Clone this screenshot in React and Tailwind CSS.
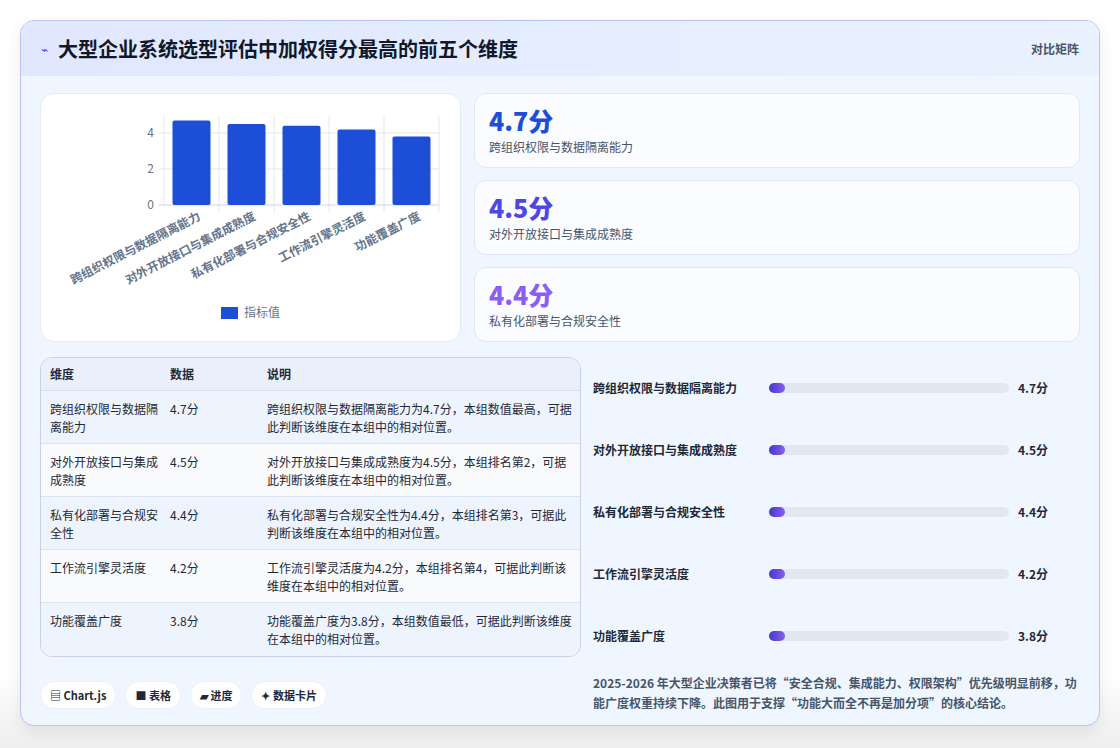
const data = [
  { n: "跨组织权限与数据隔离能力", v: 4.7, d: "跨组织权限与数据隔离能力为4.7分，本组数值最高，可据此判断该维度在本组中的相对位置。", t: "跨组织权限与数据隔离能力", tn: "跨组织权限与数据隔\n离能力" },
  { n: "对外开放接口与集成成熟度", v: 4.5, d: "对外开放接口与集成成熟度为4.5分，本组排名第2，可据此判断该维度在本组中的相对位置。", tn: "对外开放接口与集成\n成熟度" },
  { n: "私有化部署与合规安全性", v: 4.4, d: "私有化部署与合规安全性为4.4分，本组排名第3，可据此判断该维度在本组中的相对位置。", tn: "私有化部署与合规安\n全性" },
  { n: "工作流引擎灵活度", v: 4.2, d: "工作流引擎灵活度为4.2分，本组排名第4，可据此判断该维度在本组中的相对位置。", tn: "工作流引擎灵活度" },
  { n: "功能覆盖广度", v: 3.8, d: "功能覆盖广度为3.8分，本组数值最低，可据此判断该维度在本组中的相对位置。", tn: "功能覆盖广度" },
];
const F = { fontFamily: '"Noto Sans CJK SC","Noto Sans",sans-serif' };

function Chart() {
  const base = 111, unit = 18, x0 = 123, step = 55;
  return (
    <svg width="420" height="248" viewBox="0 0 420 248" style={F}>
      {[0, 1, 2, 3, 4, 5].map(i => (
        <line key={i} x1={x0 + i * step} x2={x0 + i * step} y1={22} y2={i===0?111:118} stroke="#e5e7eb" />
      ))}
      {[0, 2, 4].map(t => (
        <g key={t}>
          <line x1={x0 - 5} x2={x0 + 5 * step} y1={base - t * unit} y2={base - t * unit} stroke={t === 0 ? "#cbd5e1" : "#e5e7eb"} />
          <text x={x0 - 10} y={base - t * unit + 4} fontSize="12" fill="#6b7280" textAnchor="end">{t}</text>
        </g>
      ))}
      {data.map((d, i) => {
        const cx = x0 + i * step + step / 2;
        const h = d.v * unit;
        return (
          <g key={i}>
            <rect x={cx - 19} y={base - h} width="38" height={h} rx="2" fill="#1d4ed8" />
            <text x={cx + 10} y={125} fontSize="12" fontWeight="600" fill="#64748b" textAnchor="end" transform={`rotate(-27 ${cx + 10} 125)`}>{d.n}</text>
          </g>
        );
      })}
      <rect x="180" y="213" width="17" height="12" fill="#1d4ed8" />
      <text x="203" y="223" fontSize="12" fill="#64748b">指标值</text>
    </svg>
  );
}

export default function App() {
  const stats = [
    { v: "4.7分", c: "text-[#1d4ed8]", n: data[0].n },
    { v: "4.5分", c: "text-[#4f46e5]", n: data[1].n },
    { v: "4.4分", c: "text-[#8b5cf6]", n: data[2].n },
  ];
  return (
    <div className="w-[1120px] h-[748px] bg-gradient-to-b from-white from-90% to-[#eeeeee] pt-[20px] px-[20px]" style={F}>
      <div className="h-[706px] rounded-[14px] border border-[#b9c3ee] bg-[#eff6ff] overflow-hidden shadow-[0_6px_16px_rgba(0,0,0,0.08)]">
        <div className="h-[55px] bg-gradient-to-r from-[#e0e7ff] to-[#eaf2ff] flex items-center justify-between px-[20px]">
          <div className="flex items-center gap-[10px]">
            <span className="text-[#4f46e5] text-[12px]">⌁</span>
            <span className="text-[20px] font-bold text-[#111827]">大型企业系统选型评估中加权得分最高的前五个维度</span>
          </div>
          <span className="text-[12px] font-semibold text-[#475569]">对比矩阵</span>
        </div>
        <div className="px-[19px] pt-[17px]">
          <div className="flex gap-[13px]">
            <div className="w-[421px] h-[249px] bg-white rounded-[14px] border border-[#e5eaf5]"><Chart /></div>
            <div className="flex-1 flex flex-col gap-[12px]">
              {stats.map((s, i) => (
                <div key={i} className="h-[75px] bg-[#fbfcff] rounded-[12px] border border-[#dfe6f5] px-[14px] pt-[10px]">
                  <div className={`text-[25px] font-extrabold leading-[32px] ${s.c}`}>{s.v}</div>
                  <div className="text-[12px] text-[#475569] mt-[2px]">{s.n}</div>
                </div>
              ))}
            </div>
          </div>
          <div className="flex mt-[15px]">
            <div className="w-[541px]">
              <div className="rounded-[12px] border border-[#c7d2e8] overflow-hidden text-[12px] text-[#1f2937]">
                <div className="flex h-[33px] items-center bg-[#eaf0fb] font-semibold border-b border-[#d6def0]">
                  <div className="w-[129px] pl-[9px]">维度</div><div className="w-[97px]">数据</div><div className="flex-1">说明</div>
                </div>
                {data.map((d, i) => (
                  <div key={i} className={`flex h-[53px] pt-[9px] leading-[18px] ${i % 2 ? "bg-[#f8fafc]" : "bg-[#eef4fe]"} ${i < 4 ? "border-b border-[#dde4f1]" : ""}`}>
                    <div className="w-[129px] pl-[9px] pr-[8px] whitespace-pre-line">{d.tn}</div>
                    <div className="w-[97px]">{d.v}分</div>
                    <div className="flex-1 pr-[8px]">{d.d}</div>
                  </div>
                ))}
              </div>
              <div className="flex gap-[9px] mt-[24px] text-[11px] font-semibold text-[#1f2937]">
                {["▤ Chart.js", "■ 表格", "▰ 进度", "✦ 数据卡片"].map((c, i) => (
                  <span key={i} className="h-[28px] px-[9px] rounded-full bg-white border border-[#edf0f6] flex items-center">{c}</span>
                ))}
              </div>
            </div>
            <div className="flex-1 pl-[12px] flex flex-col">
              {data.map((d, i) => (
                <div key={i} className="h-[62px] flex items-center text-[12px] font-semibold text-[#1f2937]">
                  <div className="w-[176px]">{d.n}</div>
                  <div className="w-[240px] h-[10px] rounded-full bg-[#e2e8f0]"><div className="h-full w-[16px] rounded-full bg-gradient-to-r from-[#4338ca] to-[#8b5cf6]" /></div>
                  <div className="ml-[9px]">{d.v}分</div>
                </div>
              ))}
              <div className="mt-[6px] text-[12px] font-semibold text-[#475569] leading-[20px] pr-[2px]">
                2025-2026 年大型企业决策者已将“安全合规、集成能力、权限架构”优先级明显前移，功能广度权重持续下降。此图用于支撑“功能大而全不再是加分项”的核心结论。
              </div>
            </div>
          </div>
        </div>
      </div>
    </div>
  );
}
